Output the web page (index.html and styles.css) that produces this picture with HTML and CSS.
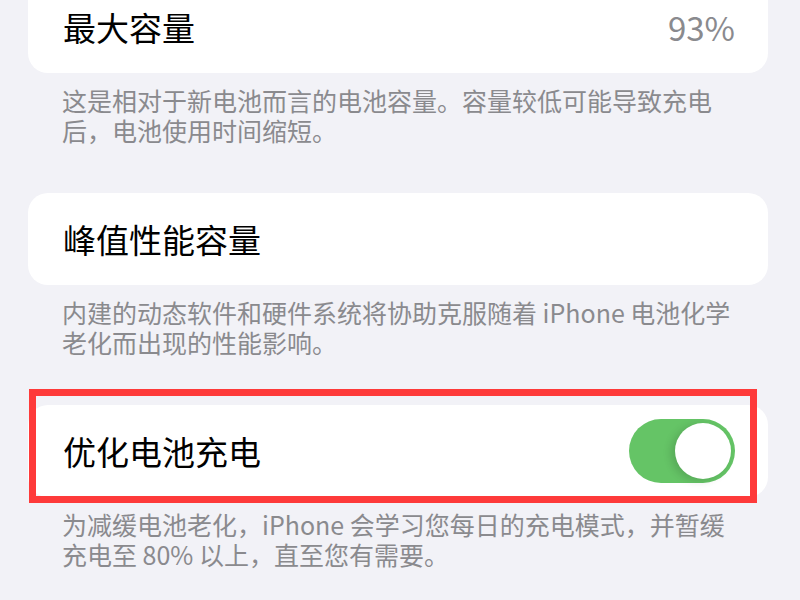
FILE: index.html
```html
<!DOCTYPE html>
<html lang="zh-CN">
<head>
    <meta charset="UTF-8">
    <meta name="viewport" content="width=device-width, initial-scale=1.0">
    <title>电池健康</title>
    <link rel="stylesheet" href="styles.css">
</head>
<body>
    <div class="settings">
        <section class="group">
            <div class="cell">
                <span class="cell-title">最大容量</span>
                <span class="cell-value">93%</span>
            </div>
            <p class="group-footer">这是相对于新电池而言的电池容量。容量较低可能导致充电后，电池使用时间缩短。</p>
        </section>

        <section class="group">
            <div class="cell">
                <span class="cell-title">峰值性能容量</span>
            </div>
            <p class="group-footer">内建的动态软件和硬件系统将协助克服随着 iPhone 电池化学老化而出现的性能影响。</p>
        </section>

        <section class="group">
            <div class="cell-wrap">
                <div class="cell">
                    <span class="cell-title">优化电池充电</span>
                    <span class="switch is-on"><span class="switch-knob"></span></span>
                </div>
                <!-- 标注框 -->
                <div class="highlight"></div>
            </div>
            <p class="group-footer">为减缓电池老化，iPhone 会学习您每日的充电模式，并暂缓充电至 80% 以上，直至您有需要。</p>
        </section>
    </div>
</body>
</html>
```

FILE: styles.css
```css
body {
    margin: 0;
    background-color: #f2f2f7;
    font-family: "Noto Sans CJK SC", "Noto Sans", sans-serif;
    overflow: hidden;
}
.settings {
    padding: 0 32px 0 28px;
    margin-top: -19px;
}
.group {
    margin-bottom: 48px;
}
.cell {
    background: #fff;
    border-radius: 20px;
    height: 92px;
    padding: 0 33px 0 35px;
    display: flex;
    align-items: center;
    justify-content: space-between;
}
.cell-title {
    font-size: 33px;
    color: #000;
}
.cell-value {
    font-size: 33px;
    color: #8a8a8e;
}
.group-footer {
    margin: 12px 0 0 0;
    padding: 0 34px;
    font-size: 25px;
    line-height: 30px;
    color: #8a8a8e;
}
.cell-wrap {
    position: relative;
}
.highlight {
    position: absolute;
    top: -16px;
    left: 1px;
    right: 11px;
    bottom: -6px;
    border: 7px solid #fe3a3a;
}
.switch {
    width: 106px;
    height: 64px;
    border-radius: 32px;
    background: #e9e9eb;
    padding: 4px;
    box-sizing: border-box;
    display: flex;
}
.switch.is-on {
    background: #65c466;
    justify-content: flex-end;
}
.switch-knob {
    width: 56px;
    height: 56px;
    border-radius: 50%;
    background: #fff;
    box-shadow: -4px 2px 8px rgba(0, 0, 0, 0.14);
}
```
